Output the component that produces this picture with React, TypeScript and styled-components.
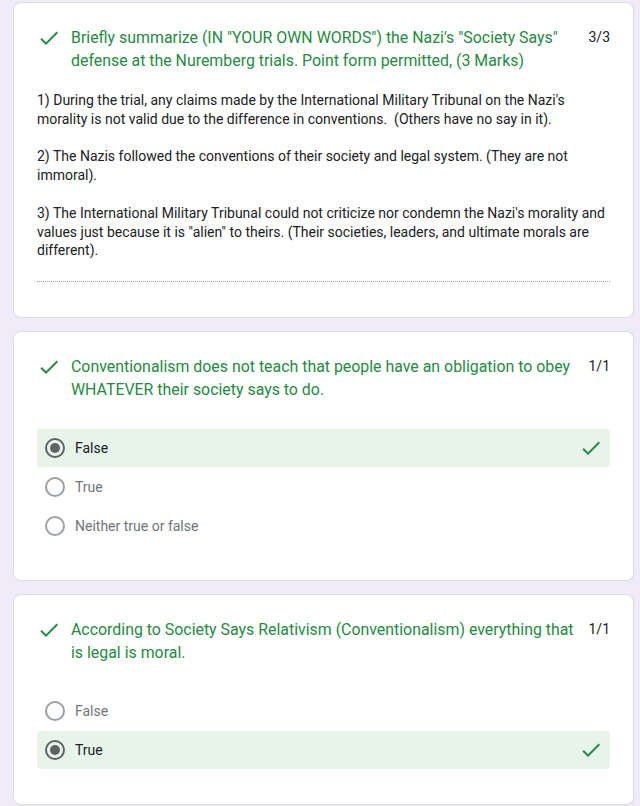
import React from "react";
import styled, { createGlobalStyle } from "styled-components";

const GlobalStyle = createGlobalStyle`
  html, body {
    margin: 0;
    padding: 0;
    background: #f0ebf8;
    font-family: Roboto, "Liberation Sans", Arial, sans-serif;
  }
`;

const SPage = styled.div`
  display: flex;
  flex-direction: column;
  gap: 13px;
  padding: 2px 6px 4px 13px;
`;

const SCard = styled.div`
  background: #fff;
  border: 1px solid #dadce0;
  border-radius: 8px;
  padding: 23px 23px 35px 23px;
`;

const SHeader = styled.div`
  display: flex;
  align-items: flex-start;
`;

const SCheckBox = styled.div`
  flex: none;
  width: 24px;
  height: 24px;
  margin-right: 10px;
`;

const STitle = styled.div`
  flex: 1;
  font-size: 15.9px;
  line-height: 23px;
  color: #258a42;
`;

const SScore = styled.div`
  flex: none;
  margin-left: 8px;
  font-size: 14px;
  line-height: 23px;
  color: #202124;
`;

const SAnswer = styled.div`
  margin-top: 19px;
  font-size: 14px;
  line-height: 18.8px;
  color: #202124;
  white-space: pre-wrap;
  padding-bottom: 21px;
  border-bottom: 1px dotted #9aa0a6;
`;

const SOptions = styled.div<{ $gap: number }>`
  margin-top: ${(p) => p.$gap}px;
  display: flex;
  flex-direction: column;
  gap: 1px;
`;

const SOption = styled.div<{ $correct?: boolean }>`
  display: flex;
  align-items: center;
  height: 38px;
  padding: 0 7px 0 8px;
  border-radius: 4px;
  background: ${(p) => (p.$correct ? "#e6f4ea" : "transparent")};
`;

const SRadio = styled.div<{ $on?: boolean }>`
  flex: none;
  box-sizing: border-box;
  width: 20px;
  height: 20px;
  border-radius: 50%;
  border: 2px solid ${(p) => (p.$on ? "#5f6368" : "#9aa0a6")};
  display: flex;
  align-items: center;
  justify-content: center;
  margin-right: 10px;
  &::after {
    content: "";
    display: ${(p) => (p.$on ? "block" : "none")};
    width: 10px;
    height: 10px;
    border-radius: 50%;
    background: #5f6368;
  }
`;

const SLabel = styled.div<{ $on?: boolean }>`
  flex: 1;
  font-size: 14px;
  color: ${(p) => (p.$on ? "#202124" : "#70757a")};
`;

const CheckIcon = () => (
  <svg width={24} height={24} viewBox="0 0 24 24" fill="#258a42">
    <path d="M9 16.17L4.83 12l-1.42 1.41L9 19 21 7l-1.41-1.41z" />
  </svg>
);

type Option = { label: string; selected?: boolean };

const Question = ({
  title,
  score,
  options,
  gap,
}: {
  title: string;
  score: string;
  options: Option[];
  gap: number;
}) => (
  <SCard>
    <SHeader>
      <SCheckBox>
        <CheckIcon />
      </SCheckBox>
      <STitle>{title}</STitle>
      <SScore>{score}</SScore>
    </SHeader>
    <SOptions $gap={gap}>
      {options.map((o) => (
        <SOption key={o.label} $correct={o.selected}>
          <SRadio $on={o.selected} />
          <SLabel $on={o.selected}>{o.label}</SLabel>
          {o.selected && <CheckIcon />}
        </SOption>
      ))}
    </SOptions>
  </SCard>
);

const answer = `1) During the trial, any claims made by the International Military Tribunal on the Nazi's morality is not valid due to the difference in conventions.  (Others have no say in it).

2) The Nazis followed the conventions of their society and legal system. (They are not immoral).

3) The International Military Tribunal could not criticize nor condemn the Nazi's morality and values just because it is "alien" to theirs. (Their societies, leaders, and ultimate morals are different).`;

export default function App() {
  return (
    <>
      <GlobalStyle />
      <SPage>
        <SCard>
          <SHeader>
            <SCheckBox>
              <CheckIcon />
            </SCheckBox>
            <STitle>
              Briefly summarize (IN "YOUR OWN WORDS") the Nazi's "Society Says" defense at the
              Nuremberg trials. Point form permitted, (3 Marks)
            </STitle>
            <SScore>3/3</SScore>
          </SHeader>
          <SAnswer>{answer}</SAnswer>
        </SCard>
        <Question
          title="Conventionalism does not teach that people have an obligation to obey WHATEVER their society says to do."
          score="1/1"
          gap={28}
          options={[
            { label: "False", selected: true },
            { label: "True" },
            { label: "Neither true or false" },
          ]}
        />
        <Question
          title="According to Society Says Relativism (Conventionalism) everything that is legal is moral."
          score="1/1"
          gap={28}
          options={[{ label: "False" }, { label: "True", selected: true }]}
        />
      </SPage>
    </>
  );
}
